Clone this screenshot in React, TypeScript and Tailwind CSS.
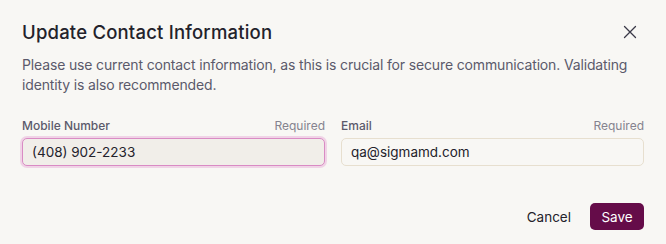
import React from "react";

export default function App() {
  return (
    <div className="w-[666px] h-[244px] bg-[#f8f7f4] px-[22px] pt-[18px] text-[#23222b] flex flex-col" style={{ fontFamily: "Inter, 'Noto Sans', sans-serif" }}>
      <div className="flex items-center justify-between h-[28px]">
        <h2 className="text-[18.5px] leading-[28px] font-medium tracking-[0.2px] text-[#23222b]">Update Contact Information</h2>
        <button className="block w-[16px] h-[16px] mr-[6px] text-[#3a3947]">
          <svg viewBox="0 0 16 16" width="16" height="16" fill="none" stroke="currentColor" strokeWidth="1.3" strokeLinecap="round">
            <path d="M2.5 2.5l11 11M13.5 2.5l-11 11" />
          </svg>
        </button>
      </div>
      <p className="mt-[9px] text-[14px] leading-[20px] tracking-[-0.15px] text-[#5b5a6b]">
        Please use current contact information, as this is crucial for secure communication. Validating identity is also recommended.
      </p>
      <div className="mt-[23px] grid grid-cols-2 gap-[16px]">
        <div className="flex flex-col">
          <div className="flex justify-between text-[12px] leading-[16px] mb-[4px]">
            <span className="font-medium text-[#5b5a6b]">Mobile Number</span>
            <span className="text-[#85838f]">Required</span>
          </div>
          <input
            className="block w-full h-[28px] rounded-[5px] bg-[#f1eee9] border border-[#d98bc4] ring-2 ring-[#f0d3e6] px-[9px] text-[13.5px] text-[#23222b] outline-none"
            defaultValue="(408) 902-2233"
          />
        </div>
        <div className="flex flex-col">
          <div className="flex justify-between text-[12px] leading-[16px] mb-[4px]">
            <span className="font-medium text-[#5b5a6b]">Email</span>
            <span className="text-[#85838f]">Required</span>
          </div>
          <input
            className="block w-full h-[28px] rounded-[5px] bg-[#f8f7f4] border border-[#e7dfcf] px-[9px] text-[13.5px] text-[#23222b] outline-none"
            defaultValue="qa@sigmamd.com"
          />
        </div>
      </div>
      <div className="mt-[37px] flex justify-end items-center gap-[19px]">
        <button className="block text-[13.5px] leading-[20px] text-[#23222b]">Cancel</button>
        <button className="block h-[27px] w-[54px] rounded-[5px] bg-[#650c49] text-white text-[13.5px] leading-[20px]">Save</button>
      </div>
    </div>
  );
}
